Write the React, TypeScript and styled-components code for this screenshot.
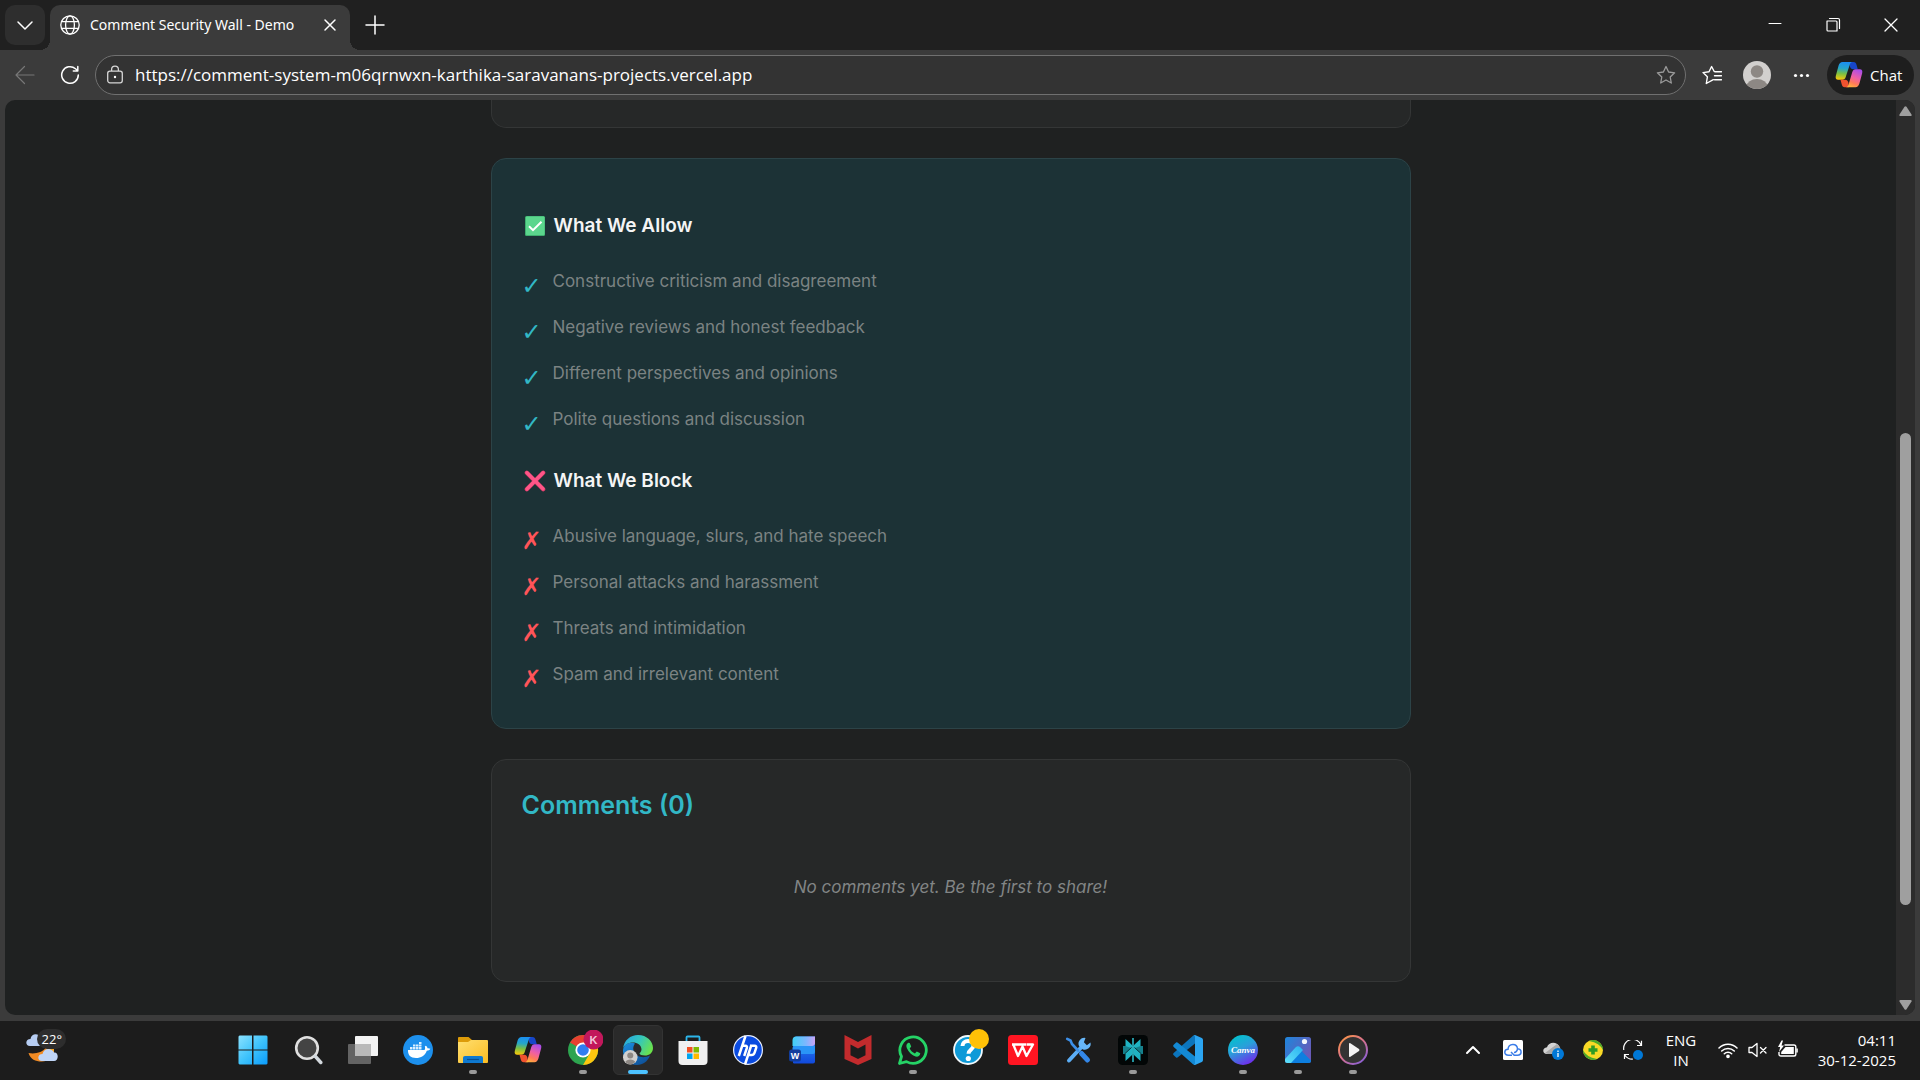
import React from 'react';
import styled, { createGlobalStyle } from 'styled-components';

const uiFont = '"Open Sans", "Noto Sans", sans-serif';
const pageFont = 'Inter, "Liberation Sans", sans-serif';

const GlobalStyle = createGlobalStyle`
  *, *::before, *::after { box-sizing: border-box; }
  html, body { margin: 0; background: #3b3b3b; }
  button { border: 0; padding: 0; background: none; color: inherit; font: inherit; }
  h2, h3, p, ul { margin: 0; padding: 0; }
  svg { display: block; flex: none; }
`;

const Screen = styled.div`
  display: flex;
  flex-direction: column;
  height: 100vh;
  overflow: hidden;
  background: #3b3b3b;
  color: #ffffff;
  font-family: ${uiFont};
`;

/* ---------- browser chrome ---------- */

const TitleBar = styled.header`
  display: flex;
  align-items: center;
  flex: none;
  height: 50px;
  padding-left: 5px;
  background: #202020;
`;

const TabMenuButton = styled.button`
  display: grid;
  place-items: center;
  width: 40px;
  height: 40px;
  margin-right: 5px;
  border-radius: 10px;
  background: #2e2e2e;
`;

const Tab = styled.div`
  position: relative;
  display: flex;
  align-items: center;
  align-self: flex-end;
  gap: 10px;
  width: 300px;
  height: 45px;
  padding: 0 10px 5px;
  border-radius: 10px 10px 0 0;
  background: #3b3b3b;
  font-family: "Noto Sans", "Open Sans", sans-serif;
  font-size: 14px;
  line-height: 22px;

  &::before,
  &::after {
    content: '';
    position: absolute;
    bottom: 0;
    width: 10px;
    height: 10px;
  }
  &::before {
    left: -10px;
    background: radial-gradient(circle at 0 0, transparent 10px, #3b3b3b 10px);
  }
  &::after {
    right: -10px;
    background: radial-gradient(circle at 100% 0, transparent 10px, #3b3b3b 10px);
  }
`;

const TabTitle = styled.span`
  flex: 1;
  white-space: nowrap;
`;

const SquareButton = styled.button<{ $size: number }>`
  display: grid;
  place-items: center;
  flex: none;
  width: ${(p) => p.$size}px;
  height: ${(p) => p.$size}px;
`;

const NewTabButton = styled(SquareButton)`
  margin-left: 10px;
`;

const WindowControls = styled.div`
  display: flex;
  margin-left: auto;
`;

const WindowButton = styled.button`
  display: grid;
  place-items: center;
  width: 58px;
  height: 50px;
`;

const Toolbar = styled.div`
  display: flex;
  align-items: center;
  flex: none;
  height: 50px;
  padding: 0 6px 0 5px;
`;

const NavButtons = styled.div`
  display: flex;
  gap: 5px;
  margin-right: 5px;
`;

const AddressBar = styled.label`
  display: flex;
  align-items: center;
  flex: 1;
  gap: 11px;
  height: 40px;
  padding: 0 9px 0 10px;
  border: 1px solid #707070;
  border-radius: 20px;
  background: #333333;
`;

const AddressInput = styled.input`
  flex: 1;
  min-width: 0;
  padding: 0;
  border: 0;
  outline: 0;
  background: transparent;
  color: #ffffff;
  font-family: ${uiFont};
  font-size: 17px;
  line-height: 24px;
`;

const ToolbarActions = styled.div`
  display: flex;
  align-items: center;
  gap: 5px;
  margin-left: 6px;
`;

const ChatButton = styled.button`
  display: flex;
  align-items: center;
  gap: 7px;
  width: 87px;
  height: 40px;
  padding-left: 8px;
  border-radius: 20px;
  background: #1e1e1e;
  font-size: 15px;
  line-height: 20px;
`;

/* ---------- web page ---------- */

const Viewport = styled.div`
  display: flex;
  flex: 1;
  min-height: 0;
  margin: 0 5px 6px;
  overflow: hidden;
  border-radius: 10px;
  background: #1f2121;
`;

const PageContent = styled.main`
  flex: 1;
  overflow: hidden;
  font-family: ${pageFont};
`;

const Column = styled.div`
  display: flex;
  flex-direction: column;
  gap: 30px;
  max-width: 920px;
  margin: 0 auto;
`;

const Card = styled.section`
  padding: 30px;
  border: 1px solid #343636;
  border-radius: 15px;
  background: #262828;
`;

const PreviousCard = styled(Card)`
  height: 28px;
  padding: 0;
  border-top: 0;
  border-radius: 0 0 15px 15px;
`;

const GuidelinesCard = styled(Card)`
  padding: 28px 30px 31px;
  border-color: #2c4347;
  background: #1c3236;
`;

const GuidelineHeading = styled.h3`
  display: flex;
  align-items: center;
  gap: 8px;
  margin: 26px 0 20px;
  color: #f5f5f5;
  font-size: 19px;
  font-weight: 600;
  line-height: 25px;
`;

const GuidelineList = styled.ul`
  list-style: none;
`;

const GuidelineItem = styled.li`
  display: flex;
  gap: 11px;
  padding: 9px 0;
  color: #7b8383;
  font-size: 17px;
  line-height: 28px;
`;

const Mark = styled.span<{ $tone: string }>`
  width: 20px;
  height: 28px;
  padding-top: 8px;
  color: ${(p) => p.$tone};
  font-family: "DejaVu Sans", sans-serif;
  font-size: 24px;
  font-weight: 700;
  line-height: 22px;
`;

const CommentsHeading = styled.h2`
  margin-bottom: 3px;
  color: #32b8c6;
  font-size: 25px;
  font-weight: 600;
  line-height: 30px;
`;

const EmptyState = styled.p`
  padding: 50px 0;
  color: #828585;
  font-size: 17px;
  font-style: italic;
  line-height: 28px;
  text-align: center;
`;

const ScrollBar = styled.div`
  display: flex;
  flex-direction: column;
  align-items: center;
  flex: none;
  width: 19px;
  padding: 6px 0 5px;
  background: #2c2c2c;
`;

const Spacer = styled.div<{ $grow: number }>`
  flex: ${(p) => p.$grow} 0 0;
`;

const Thumb = styled.div`
  flex: 472 0 0;
  width: 11px;
  border-radius: 6px;
  background: #9f9f9f;
`;

/* ---------- taskbar ---------- */

const Taskbar = styled.footer`
  display: flex;
  align-items: center;
  flex: none;
  height: 59px;
  padding: 0 24px 2px 0;
  background: #1c1c1c;
`;

const Weather = styled.button`
  flex: 0 0 228px;
  padding-left: 24px;
  text-align: left;
`;

const WeatherFrame = styled.span`
  position: relative;
  display: block;
  width: 44px;
  height: 42px;
`;

const Temperature = styled.span`
  position: absolute;
  top: 0;
  right: 2px;
  padding: 0 4px 0 5px;
  border-radius: 10px;
  background: #2d2d2d;
  font-size: 13px;
  line-height: 20px;
`;

const Apps = styled.nav`
  display: flex;
  gap: 5px;
`;

const AppButton = styled.button<{ $active?: boolean }>`
  position: relative;
  display: grid;
  place-items: center;
  width: 50px;
  height: 50px;
  border: 1px solid ${(p) => (p.$active ? '#333333' : 'transparent')};
  border-radius: 6px;
  background: ${(p) => (p.$active ? '#2a2a2a' : 'transparent')};
`;

const Indicator = styled.span<{ $active?: boolean }>`
  position: absolute;
  bottom: 0;
  left: 50%;
  width: ${(p) => (p.$active ? 20 : 8)}px;
  height: 4px;
  border-radius: 2px;
  background: ${(p) => (p.$active ? '#4cc2ff' : '#9a9a9a')};
  transform: translateX(-50%);
`;

const Tray = styled.div`
  display: flex;
  align-items: center;
  margin-left: auto;
  font-size: 15px;
  line-height: 20px;
`;

const TrayButton = styled.button`
  display: grid;
  place-items: center;
  width: 40px;
  height: 50px;
`;

const LanguageButton = styled.button`
  width: 56px;
  text-align: center;
`;

const StatusButton = styled.button`
  display: flex;
  gap: 10px;
  padding: 0 9px;
`;

const Clock = styled.button`
  width: 89px;
  text-align: right;
  white-space: nowrap;
`;

/* ---------- icons ---------- */

const Line = ({ d, size = 20, color = '#fff', w = 1.3 }: { d: string; size?: number; color?: string; w?: number }) => (
  <svg width={size} height={size} viewBox={`0 0 ${size} ${size}`} fill="none" stroke={color} strokeWidth={w} strokeLinecap="round" strokeLinejoin="round">
    <path d={d} />
  </svg>
);

const GlobeIcon = () => (
  <svg width="20" height="20" viewBox="0 0 20 20" fill="none" stroke="#fff" strokeWidth="1.3">
    <circle cx="10" cy="10" r="9.2" />
    <ellipse cx="10" cy="10" rx="4.4" ry="9.2" />
    <path d="M1.6 6.7h16.8M1.6 13.3h16.8" />
  </svg>
);

const LockIcon = () => (
  <svg width="18" height="20" viewBox="0 0 18 20" fill="none" stroke="#d6d6d6" strokeWidth="1.3">
    <rect x="1.7" y="6.2" width="14.6" height="11.6" rx="2.2" />
    <path d="M5.6 6V4.6a3.4 3.4 0 0 1 6.8 0V6" />
    <circle cx="9" cy="12" r="1.2" fill="#fff" stroke="none" />
  </svg>
);

const AvatarIcon = ({ size }: { size: number }) => (
  <svg width={size} height={size} viewBox="0 0 28 28">
    <clipPath id="avatarClip"><circle cx="14" cy="14" r="14" /></clipPath>
    <g clipPath="url(#avatarClip)">
      <rect width="28" height="28" fill="#d2d0ce" />
      <circle cx="14" cy="10.5" r="6.2" fill="#8d8884" />
      <ellipse cx="14" cy="25.5" rx="10.5" ry="7.5" fill="#8d8884" />
    </g>
  </svg>
);

const CopilotIcon = ({ id }: { id: string }) => (
  <svg width="28" height="28" viewBox="0 0 28 28">
    <defs>
      <linearGradient id={`${id}a`} x1="0.4" y1="0" x2="0.3" y2="1">
        <stop offset="0" stopColor="#1b8ff0" />
        <stop offset="0.35" stopColor="#25a6c9" />
        <stop offset="0.65" stopColor="#7bc043" />
        <stop offset="1" stopColor="#fbc90a" />
      </linearGradient>
      <linearGradient id={`${id}b`} x1="0.7" y1="0" x2="0.3" y2="1">
        <stop offset="0" stopColor="#a94dea" />
        <stop offset="0.45" stopColor="#ef5fa5" />
        <stop offset="0.75" stopColor="#ff7a59" />
        <stop offset="1" stopColor="#ffb13d" />
      </linearGradient>
    </defs>
    <path d="M14 1h4.500c1.800 0 2.600 1 3.100 2.900L22.800 8.200h-4.600c-2 0-2.600-1-3.200-2.400Z" fill="#1746c9" />
    <path d="M7.500 1H17.500c-1.700 0-2.400 1.500-3 3.500L10.700 16c-.5 1.700-1.500 2.800-3.200 2.800H3.300C.8 18.800.2 17 .9 14.600L3.600 4.600C4.300 2.200 5.600 1 7.500 1Z" fill={`url(#${id}a)`} />
    <path d="M14 26.200H9.800c-1.800 0-2.600-1-3.100-2.900L5.500 18.800h4.600c2 0 2.600 1 3.200 2.400Z" fill="#f0522f" />
    <path d="M20.500 26.200H10.800c1.700 0 2.400-1.500 3-3.500L17.300 11c.5-1.700 1.500-2.800 3.200-2.800h4.200c2.500 0 3.100 1.800 2.400 4.200l-2.700 10.200c-.7 2.400-2 3.600-3.900 3.600Z" fill={`url(#${id}b)`} />
  </svg>
);

const AllowIcon = () => (
  <svg width="24" height="24" viewBox="0 0 24 24" role="img" aria-label="Allowed">
    <rect x="3" y="2" width="20" height="20" rx="1.500" fill="#3fae6f" />
    <rect x="4" y="2.500" width="18.500" height="18.500" rx="1" fill="#5bd68d" />
    <path d="m7 12.200 4 4 8.500-8.500" fill="none" stroke="#fff" strokeWidth="2" />
  </svg>
);

const BlockIcon = () => (
  <svg width="24" height="24" viewBox="0 0 24 24" role="img" aria-label="Blocked">
    <path d="m4.800 3.800 16.400 16.400M21.200 3.800 4.800 20.200" stroke="#d93a67" strokeWidth="4.200" strokeLinecap="round" />
    <path d="m5 3.800 16 16M21 3.800 5 20" stroke="#ff5688" strokeWidth="3.400" strokeLinecap="round" />
  </svg>
);

const WeatherIcon = () => (
  <svg width="44" height="40" viewBox="0 0 44 40">
    <path d="M4.500 24c7 1.500 14-1 17-5l8-1c1 9-4 14.500-12 14.500-6 0-11-2-13-8.500Z" fill="#f08a24" />
    <path d="M22 18h8v9l-7 2Z" fill="#f5a623" />
    <path d="M6 17c-5 0-5-7 .5-7C7 4 15 3.500 17 9c4 0 5 8 0 8Z" fill="#b6cdf2" />
    <path d="M18 32c-5 0-5-7 .5-7 1-6 9-7 11.500-1.500 5-.5 5 8.500 0 8.500Z" fill="#c0d5f7" />
  </svg>
);

const StartIcon = () => (
  <svg width="30" height="30" viewBox="0 0 30 30">
    <defs>
      <linearGradient id="startGrad" x1="0" y1="0" x2="1" y2="1">
        <stop offset="0" stopColor="#8be2ff" /><stop offset="0.5" stopColor="#3fc3fb" /><stop offset="1" stopColor="#0a9bfb" />
      </linearGradient>
    </defs>
    <path d="M1.500.5H14v14H.5v-13ZM15.500.5H28.500l1 1v13h-14ZM.5 15.500H14v14H1.500l-1-1ZM15.500 15.500h14v13l-1 1h-13Z" fill="url(#startGrad)" />
  </svg>
);

const SearchIcon = () => (
  <svg width="30" height="30" viewBox="0 0 30 30">
    <circle cx="14" cy="13" r="10.800" fill="#444" stroke="#e0e0e0" strokeWidth="2.600" />
    <path d="m22 21 5.800 6.500" stroke="#d3d9de" strokeWidth="3.400" strokeLinecap="round" />
  </svg>
);

const TaskViewIcon = () => (
  <svg width="30" height="30" viewBox="0 0 30 30">
    <rect x="7" y="1" width="23" height="20" rx="1" fill="#f3f3f3" />
    <rect x="0" y="9" width="23" height="20" rx="1" fill="#636363" />
    <rect x="7" y="9" width="16" height="12" fill="#b9b9b9" />
  </svg>
);

const DockerIcon = () => (
  <svg width="30" height="30" viewBox="0 0 30 30">
    <circle cx="15" cy="15" r="15" fill="#1d90ed" />
    <path d="M5 15h16.500c.8-1 .8-2.300.3-3.500l1-.7c1 .6 1.500 1.500 1.700 2.400 1-.1 2 0 2.800.6-.7 1.500-2 1.900-3.500 1.900C22 20.500 18 23 13 23c-5.500 0-8.300-3-8-8Z" fill="#fff" />
    <path d="M7 12h2.500v2.500H7ZM10 12h2.500v2.500H10ZM13 12h2.500v2.500H13ZM16 12h2.500v2.500H16ZM10 9.500h2.500v2H10ZM13 9.500h2.500v2H13ZM16 9.500h2.500v2H16ZM16 7h2.500v2H16Z" fill="#dcefff" />
  </svg>
);

const FolderIcon = () => (
  <svg width="30" height="30" viewBox="0 0 30 30">
    <defs>
      <linearGradient id="folderGrad" x1="0" y1="0" x2="1" y2="1">
        <stop offset="0" stopColor="#ffdf70" /><stop offset="1" stopColor="#fbbc22" />
      </linearGradient>
    </defs>
    <path d="M1 2h9.500L14 5H29v8H0V3q0-1 1-1Z" fill="#dd9b09" />
    <path d="M0 7h10l3-2h16q1 0 1 1v21q0 1-1 1H1q-1 0-1-1Z" fill="url(#folderGrad)" />
    <path d="M5 28v-5.500Q5 21 7 21h16q2 0 2 1.500V28Z" fill="#0f79d0" />
    <path d="M9 24.500h12" stroke="#064f94" strokeWidth="1.200" />
  </svg>
);

const ChromeIcon = () => (
  <svg width="40" height="40" viewBox="0 0 40 40">
    <circle cx="20" cy="20" r="15" fill="#2da44f" />
    <path d="M20 20 7 12.500A15 15 0 0 1 33 12.500Z" fill="#e8402f" />
    <path d="M20 12.500h13A15 15 0 0 1 20 35l6.500-11.200Z" fill="#fdc60f" />
    <circle cx="20" cy="20" r="7.600" fill="#fff" />
    <circle cx="20" cy="20" r="5.800" fill="#2f7df0" />
    <circle cx="30.500" cy="9.500" r="10" fill="#c2185b" />
    <text x="30.500" y="13.500" fill="#f2c6d6" fontFamily='"Liberation Sans", sans-serif' fontSize="11" fontWeight="700" textAnchor="middle">K</text>
  </svg>
);

const EdgeIcon = () => (
  <svg width="30" height="30" viewBox="0 0 30 30">
    <defs>
      <linearGradient id="edgeTop" x1="0" y1="0.2" x2="1" y2="0.6">
        <stop offset="0" stopColor="#27a7e3" /><stop offset="0.5" stopColor="#34c6bd" /><stop offset="1" stopColor="#6be34a" />
      </linearGradient>
      <linearGradient id="edgeLow" x1="0" y1="0" x2="0.8" y2="1">
        <stop offset="0" stopColor="#1b8fe0" /><stop offset="1" stopColor="#0e4f97" />
      </linearGradient>
    </defs>
    <path d="M0 15C1 9 7 6.500 12 8.500c-3 4-2 9 2 12 4 2.500 9 2 13 0-2.500 6-7 9.500-13 9.500C6 30-.5 23 0 15Z" fill="url(#edgeLow)" />
    <path d="M0 14C1 5 7.500 0 15 0c9 0 15 6.500 15 13 0 5-4 7.500-8 7.500-3 0-5.500-1-5.500-2 0-.8 2-1.500 2-4C18.500 10 14 7.500 10 7.500 5 7.500 1 10 0 14Z" fill="url(#edgeTop)" />
    <g transform="translate(0 15) scale(.52)">
      <circle cx="14" cy="14" r="14" fill="#d2d0ce" />
      <circle cx="14" cy="10.500" r="5.800" fill="#8d8884" />
      <path d="M4.500 23c2-6.500 17-6.500 19 0-5 6-14 6-19 0Z" fill="#8d8884" />
    </g>
  </svg>
);

const StoreIcon = () => (
  <svg width="30" height="30" viewBox="0 0 30 30">
    <path d="M8.500 7V2.500q0-1 1-1h11q1 0 1 1V7" fill="none" stroke="#2cb5ea" strokeWidth="1.800" />
    <path d="M.5 6h29v20q0 4-4 4h-21q-4 0-4-4Z" fill="#f0f0f0" />
    <rect x="9" y="12" width="5.500" height="5.500" fill="#f25022" />
    <rect x="15.500" y="12" width="5.500" height="5.500" fill="#7fba00" />
    <rect x="9" y="18.500" width="5.500" height="5.500" fill="#00a4ef" />
    <rect x="15.500" y="18.500" width="5.500" height="5.500" fill="#ffb900" />
  </svg>
);

const HpIcon = () => (
  <svg width="30" height="30" viewBox="0 0 30 30">
    <circle cx="15" cy="15" r="14.400" fill="#0a4be0" stroke="#e8eefc" strokeWidth="1.200" />
    <g fill="none" stroke="#fff" strokeWidth="2.500">
      <path d="M12.500 1 5.800 21M9.500 10.800h2.700q2.400 0 1.600 2.400L11.200 21" />
      <path d="M18.500 9.700 12 29.500M17.800 10.800h3.700q2.400 0 1.600 2.400l-1.600 4.600q-.8 2.200-2.800 2.200h-3.500" />
    </g>
  </svg>
);

const WordIcon = () => (
  <svg width="30" height="30" viewBox="0 0 30 30">
    <defs>
      <linearGradient id="wordTop" x1="0" y1="0" x2="1" y2="0">
        <stop offset="0" stopColor="#3fd0f5" /><stop offset="0.6" stopColor="#7db7ff" /><stop offset="1" stopColor="#c9a4f5" />
      </linearGradient>
      <linearGradient id="wordLow" x1="0" y1="0" x2="0" y2="1">
        <stop offset="0" stopColor="#2f8df5" /><stop offset="1" stopColor="#1149dc" />
      </linearGradient>
    </defs>
    <path d="M5 28V5q0-3.500 3.500-3.500H27v25q0 2-2 2H6Z" fill="url(#wordLow)" />
    <path d="M4.500 11V5.500Q4.500 1.500 8.500 1.500H27V8q0 3-3 3Z" fill="url(#wordTop)" />
    <path d="M4.500 19V13q0-2 2-2H27v6q0 2-2 2Z" fill="#2a95f7" />
    <rect x="1" y="14.500" width="12" height="12" rx="2.500" fill="#123d9c" />
    <text x="7" y="24" fill="#fff" fontFamily='"Liberation Sans", sans-serif' fontSize="9" fontWeight="700" textAnchor="middle">W</text>
  </svg>
);

const McAfeeIcon = () => (
  <svg width="30" height="30" viewBox="0 0 30 30">
    <path d="m1.500 0 13.500 7L28.500 0v24L15 30 1.500 24Z" fill="#c32b2d" />
    <path d="m7.500 9.500 7.500 4 7.500-4v10.700L15 24l-7.500-3.800Z" fill="#1c1c1c" />
  </svg>
);

const WhatsAppIcon = () => (
  <svg width="30" height="30" viewBox="0 0 30 30">
    <path d="m1.500 28.500 2-7A13.200 13.200 0 1 1 8.500 26.600Z" fill="none" stroke="#25d366" strokeWidth="2.800" strokeLinejoin="round" />
    <path d="M10.300 7.800c-2 1-2.400 3.200-1.400 5.500 1.800 4 5 7 8.600 8.200 2.300.6 4.600-.6 4.800-3.200L18.800 16.500l-1.900 2c-2.400-1-4.200-2.800-5.200-5l1.500-2-1.500-3.600Z" fill="#25d366" />
  </svg>
);

const HelpIcon = () => (
  <svg width="42" height="42" viewBox="0 0 42 42">
    <circle cx="21" cy="21" r="14" fill="#0e9ad8" stroke="#f2f8fb" strokeWidth="1.800" />
    <path d="M15.500 17c0-3 2.300-5 5.500-5s5.500 2 5.500 4.800c0 3.700-5 3.900-5 8" fill="none" stroke="#fff" strokeWidth="4" />
    <circle cx="21.300" cy="29.500" r="2.600" fill="#fff" />
    <circle cx="32" cy="10" r="10" fill="#ffc107" />
  </svg>
);

const WpsIcon = () => (
  <svg width="30" height="30" viewBox="0 0 30 30">
    <rect width="30" height="30" rx="3.500" fill="#ff1522" />
    <path d="M4 9.500h14M5.500 10l4.500 11 4.500-9.500L18.500 21 25 9.500h-6.500" fill="none" stroke="#fff" strokeWidth="2.300" strokeLinejoin="round" />
  </svg>
);

const ToolsIcon = () => (
  <svg width="30" height="30" viewBox="0 0 30 30" fill="none" strokeLinecap="round">
    <path d="M6 25.500 19 11.500" stroke="#5badf5" strokeWidth="4" />
    <path d="M22.500 3A5.800 5.800 0 0 0 16 11l3.500 3.200A5.800 5.800 0 0 0 27.500 7.500l-3.600 2.700-3-2.900Z" fill="#67b6f8" />
    <path d="M4.200 3.800 7.500 5.500l1.500 3.500 6 6.500" stroke="#3c8fe8" strokeWidth="2.600" />
    <path d="m18.500 18.500 6 6.500" stroke="#3387e8" strokeWidth="5" />
  </svg>
);

const PerplexityIcon = () => (
  <svg width="30" height="30" viewBox="0 0 30 30">
    <rect width="30" height="30" rx="4.500" fill="#020606" />
    <path d="M5 11h20v8H5Z" fill="#15808c" />
    <path d="M7.500 4 14 10v10L7.500 26v-8L13 13l-5.500-2ZM22.500 4 16 10v10l6.500 6v-8L17 13l5.500-2Z" fill="#20b3c2" />
    <path d="M13.500 12.500 6.500 19M16.500 12.500l7 6.500" stroke="#06333a" strokeWidth="1" />
    <path d="M15 3v24" stroke="#2bb8c6" strokeWidth="1.600" />
  </svg>
);

const VsCodeIcon = () => (
  <svg width="30" height="30" viewBox="0 0 30 30">
    <path d="M22 0v8.500L4.500 22.500 3.300 22.700.5 20q-.8-1 .2-1.900L20 .8Z" fill="#0c75bd" />
    <path d="M22 30v-8.500L4.500 7.500 3.300 7.300.5 10q-.8 1 .2 1.900L20 29.200Z" fill="#1389d4" />
    <path d="m22 0 6.800 3q1.200.6 1.200 2v20q0 1.400-1.200 2L22 30q-.8-.2-1.800-1 1.800.8 1.800-1V2q0-1.800-1.800-1Z" fill="#2ba5f2" />
  </svg>
);

const CanvaIcon = () => (
  <svg width="30" height="30" viewBox="0 0 30 30">
    <defs>
      <linearGradient id="canvaGrad" x1="0.2" y1="0" x2="0.7" y2="1">
        <stop offset="0" stopColor="#00c4cc" /><stop offset="0.45" stopColor="#2a9fda" /><stop offset="1" stopColor="#7326ee" />
      </linearGradient>
    </defs>
    <circle cx="15" cy="15" r="15" fill="url(#canvaGrad)" />
    <text x="15" y="18" fill="#fff" fontFamily='"Liberation Serif", serif' fontSize="9" fontStyle="italic" fontWeight="700" textAnchor="middle">Canva</text>
  </svg>
);

const PhotosIcon = () => (
  <svg width="30" height="30" viewBox="0 0 30 30">
    <defs>
      <linearGradient id="photosBg" x1="0" y1="0" x2="1" y2="0.6">
        <stop offset="0" stopColor="#1d86dc" /><stop offset="1" stopColor="#6a5ab8" />
      </linearGradient>
      <linearGradient id="photosHill" x1="0" y1="1" x2="1" y2="0">
        <stop offset="0" stopColor="#5fe0fb" /><stop offset="1" stopColor="#2bb2ef" />
      </linearGradient>
    </defs>
    <rect x="2" y="2" width="26" height="26" rx="2.500" fill="url(#photosBg)" />
    <path d="M6 28 17 14.500 28 25.500q0 2.500-2.500 2.500Z" fill="#0d7fe0" />
    <path d="m2 24 10.500-11.500q2.500-2.500 5 0L20 15 8 28H4.500Q2 28 2 25.500Z" fill="url(#photosHill)" />
    <circle cx="21.500" cy="6.500" r="2.600" fill="#f2f6fb" />
  </svg>
);

const PlayerIcon = () => (
  <svg width="30" height="30" viewBox="0 0 30 30">
    <defs>
      <linearGradient id="playerRing" x1="0" y1="0" x2="0.8" y2="1">
        <stop offset="0" stopColor="#ff9a3d" /><stop offset="0.5" stopColor="#d9728b" /><stop offset="1" stopColor="#8a5fd6" />
      </linearGradient>
    </defs>
    <circle cx="15" cy="15" r="14" fill="#333" stroke="url(#playerRing)" strokeWidth="2" />
    <path d="M11 9q0-1.500 1.400-.8l8.600 5.700q1 1.100 0 2.200L12.400 21.800q-1.400.7-1.400-.8Z" fill="#f4f4f4" />
  </svg>
);

const CloudSyncIcon = () => (
  <svg width="20" height="20" viewBox="0 0 20 20">
    <rect width="20" height="20" rx="1.500" fill="#fff" />
    <path d="M9 15.200H5.500C.5 15 .8 9.500 5 9.300 5.500 3 14 3 14.500 8.700c5 .5 4.500 6.500 0 6.500h-3.300L8 12M11 12.500q3 0 3.500-3.800" fill="none" stroke="#3b7de8" strokeWidth="1.500" />
  </svg>
);

const OneDriveIcon = () => (
  <svg width="21" height="20" viewBox="0 0 21 20">
    <path d="M4 14C-1 14-1 7.500 4 7.200 5.500 1.800 14 1 16.500 7L17 14Z" fill="#d3d3d3" />
    <path d="M2 13 14 4q5 3 3 10H5Z" fill="#a9a9a9" />
    <circle cx="15" cy="14" r="6" fill="#0078d7" />
    <path d="M15 10.500v1.500M15 13v4" stroke="#fff" strokeWidth="1.300" />
  </svg>
);

const ShieldPlusIcon = () => (
  <svg width="20" height="20" viewBox="0 0 20 20">
    <circle cx="10" cy="10" r="10" fill="#f9d926" />
    <path d="M6 .9A10 10 0 0 1 20 10q-3-7-14-9.100ZM14 19.100A10 10 0 0 1 0 10q3 7 14 9.100Z" fill="#4aa92c" />
    <path d="M8.200 5.500h3.600v2.700h2.700v3.600h-2.700v2.700H8.200v-2.700H5.500V8.200h2.700Z" fill="#2f9b24" />
  </svg>
);

const UpdateIcon = () => (
  <svg width="20" height="20" viewBox="0 0 20 20">
    <path d="M.8 10A9 9 0 0 1 18 5M18.500.8V5.500H14M1.500 19V14.500H6M1.800 15a9 9 0 0 0 8 4.200" fill="none" stroke="#fff" strokeWidth="1.200" />
    <circle cx="15" cy="15" r="5" fill="#0078d7" />
  </svg>
);

const WifiIcon = () => (
  <svg width="20" height="20" viewBox="0 0 20 20" fill="none" stroke="#fff" strokeWidth="1.500" strokeLinecap="round">
    <path d="M1 8a12.700 12.700 0 0 1 18 0M3.700 11a8.900 8.900 0 0 1 12.600 0M6.300 13.700a5.200 5.200 0 0 1 7.400 0" />
    <circle cx="10" cy="16.300" r="1.100" fill="#fff" />
  </svg>
);

const MuteIcon = () => <Line d="M1 7.500h3L9 3.500v13l-5-4H1ZM12.500 7.500l5.500 5.500M18 7.500 12.500 13" />;

const BatteryIcon = () => (
  <svg width="20" height="20" viewBox="0 0 20 20">
    <path d="M6.500 5H16q1.800 0 1.800 1.800v7.400Q17.800 16 16 16H3Q1 16 1 14.200V12" fill="none" stroke="#fff" strokeWidth="1.400" />
    <path d="M7.500 7H15.800v7H3.200v-2Z" fill="#fff" />
    <path d="M18.300 8.500h1.500v4h-1.500Z" fill="#fff" />
    <path d="M3.500.5 0 7h2.200L1 12l5-6.500H3.500L5 .5Z" fill="#fff" />
  </svg>
);

const starPath = 'm10 1.500 2.600 5.500 6 .8-4.400 4.200 1.100 6-5.300-3-5.300 3 1.100-6L1.400 7.800l6-.8Z';

/* ---------- data ---------- */

const apps = [
  { name: 'Start', icon: <StartIcon /> },
  { name: 'Search', icon: <SearchIcon /> },
  { name: 'Task View', icon: <TaskViewIcon /> },
  { name: 'Docker Desktop', icon: <DockerIcon /> },
  { name: 'File Explorer', icon: <FolderIcon />, running: true },
  { name: 'Copilot', icon: <CopilotIcon id="taskCopilot" /> },
  { name: 'Google Chrome', icon: <ChromeIcon />, running: true },
  { name: 'Microsoft Edge', icon: <EdgeIcon />, running: true, active: true },
  { name: 'Microsoft Store', icon: <StoreIcon /> },
  { name: 'HP', icon: <HpIcon /> },
  { name: 'Word', icon: <WordIcon /> },
  { name: 'McAfee', icon: <McAfeeIcon /> },
  { name: 'WhatsApp', icon: <WhatsAppIcon />, running: true },
  { name: 'Help', icon: <HelpIcon /> },
  { name: 'WPS Office', icon: <WpsIcon /> },
  { name: 'Tools', icon: <ToolsIcon /> },
  { name: 'Perplexity', icon: <PerplexityIcon />, running: true },
  { name: 'Visual Studio Code', icon: <VsCodeIcon /> },
  { name: 'Canva', icon: <CanvaIcon />, running: true },
  { name: 'Photos', icon: <PhotosIcon />, running: true },
  { name: 'Media Player', icon: <PlayerIcon />, running: true },
];

const trayApps = [
  { name: 'Show hidden icons', icon: <Line d="m4 13 6-6 6 6" w={2} /> },
  { name: 'Cloud sync', icon: <CloudSyncIcon /> },
  { name: 'OneDrive', icon: <OneDriveIcon /> },
  { name: 'Security', icon: <ShieldPlusIcon /> },
  { name: 'Windows Update', icon: <UpdateIcon /> },
];

const allowed = [
  'Constructive criticism and disagreement',
  'Negative reviews and honest feedback',
  'Different perspectives and opinions',
  'Polite questions and discussion',
];

const blocked = [
  'Abusive language, slurs, and hate speech',
  'Personal attacks and harassment',
  'Threats and intimidation',
  'Spam and irrelevant content',
];

const Guidelines = ({ items, mark, tone }: { items: string[]; mark: string; tone: string }) => (
  <GuidelineList>
    {items.map((item) => (
      <GuidelineItem key={item}>
        <Mark $tone={tone}>{mark}</Mark>
        {item}
      </GuidelineItem>
    ))}
  </GuidelineList>
);

export default function App() {
  return (
    <Screen>
      <GlobalStyle />
      <TitleBar>
        <TabMenuButton aria-label="Tab actions"><Line d="m3 7 7 7 7-7" w={1.5} /></TabMenuButton>
        <Tab>
          <GlobeIcon />
          <TabTitle>Comment Security Wall - Demo</TabTitle>
          <SquareButton $size={20} aria-label="Close tab"><Line d="m5 5 10 10M15 5 5 15" w={1.5} /></SquareButton>
        </Tab>
        <NewTabButton $size={30} aria-label="New tab"><Line d="M10 1v18M1 10h18" w={1.5} /></NewTabButton>
        <WindowControls>
          <WindowButton aria-label="Minimize"><Line d="M4 8.500h12" w={1} /></WindowButton>
          <WindowButton aria-label="Restore"><Line d="M4 6h9q1 0 1 1v9H5q-1 0-1-1ZM6.500 3.500H15q1.500 0 1.500 1.500v8.500" w={1.2} /></WindowButton>
          <WindowButton aria-label="Close"><Line d="m4 4 12 12M16 4 4 16" w={1.3} /></WindowButton>
        </WindowControls>
      </TitleBar>

      <Toolbar>
        <NavButtons>
          <SquareButton $size={40} aria-label="Back"><Line d="M19 10H1M9.500 1.500 1 10l8.500 8.500" color="#777" w={1.2} /></SquareButton>
          <SquareButton $size={40} aria-label="Refresh"><Line d="M18.300 10A8.300 8.300 0 1 1 15.500 3.800L17.500 5.500M17.800 1.500V6H13.300" w={1.5} /></SquareButton>
        </NavButtons>
        <AddressBar>
          <LockIcon />
          <AddressInput aria-label="Address" defaultValue="https://comment-system-m06qrnwxn-karthika-saravanans-projects.vercel.app" />
          <SquareButton $size={20} aria-label="Add to favorites"><Line d={starPath} color="#9b9b9b" w={1.3} /></SquareButton>
        </AddressBar>
        <ToolbarActions>
          <SquareButton $size={40} aria-label="Favorites">
            <Line d="M12.200 6.500 9.600 1.500 7 6.800l-6 .8 4.400 4.200-1.100 6.700 7-3.800M13 6.800h6.500M12.500 10.800h7M12.500 14.800h7" w={1.4} />
          </SquareButton>
          <SquareButton $size={40} aria-label="Profile"><AvatarIcon size={28} /></SquareButton>
          <SquareButton $size={40} aria-label="Settings and more">
            <svg width="20" height="20" viewBox="0 0 20 20" fill="#fff">
              <circle cx="3.500" cy="10.500" r="1.600" /><circle cx="9.500" cy="10.500" r="1.600" /><circle cx="15.500" cy="10.500" r="1.600" />
            </svg>
          </SquareButton>
          <ChatButton><CopilotIcon id="chatCopilot" />Chat</ChatButton>
        </ToolbarActions>
      </Toolbar>

      <Viewport>
        <PageContent>
          <Column>
            <PreviousCard />
            <GuidelinesCard>
              <GuidelineHeading><AllowIcon />What We Allow</GuidelineHeading>
              <Guidelines items={allowed} mark="✓" tone="#32b8c6" />
              <GuidelineHeading><BlockIcon />What We Block</GuidelineHeading>
              <Guidelines items={blocked} mark="✗" tone="#ff5459" />
            </GuidelinesCard>
            <Card>
              <CommentsHeading>Comments (0)</CommentsHeading>
              <EmptyState>No comments yet. Be the first to share!</EmptyState>
            </Card>
          </Column>
        </PageContent>
        <ScrollBar>
          <svg width="13" height="10" viewBox="0 0 13 10" fill="#9f9f9f"><path d="M5.500.8q1-1.200 2 0l5 7.700q.5 1.500-1 1.500h-10Q0 10 .5 8.500Z" /></svg>
          <Spacer $grow={317} />
          <Thumb />
          <Spacer $grow={95} />
          <svg width="13" height="10" viewBox="0 0 13 10" fill="#9f9f9f"><path d="M5.500 9.200q1 1.200 2 0l5-7.700Q13 0 11.500 0h-10Q0 0 .5 1.500Z" /></svg>
        </ScrollBar>
      </Viewport>

      <Taskbar>
        <Weather aria-label="Weather">
          <WeatherFrame>
            <WeatherIcon />
            <Temperature>22°</Temperature>
          </WeatherFrame>
        </Weather>
        <Apps aria-label="Taskbar apps">
          {apps.map((app) => (
            <AppButton key={app.name} aria-label={app.name} $active={app.active}>
              {app.icon}
              {app.running && <Indicator $active={app.active} />}
            </AppButton>
          ))}
        </Apps>
        <Tray>
          {trayApps.map((app) => (
            <TrayButton key={app.name} aria-label={app.name}>{app.icon}</TrayButton>
          ))}
          <LanguageButton>ENG<br />IN</LanguageButton>
          <StatusButton aria-label="Network, volume and battery">
            <WifiIcon /><MuteIcon /><BatteryIcon />
          </StatusButton>
          <Clock>04:11<br />30-12-2025</Clock>
        </Tray>
      </Taskbar>
    </Screen>
  );
}
